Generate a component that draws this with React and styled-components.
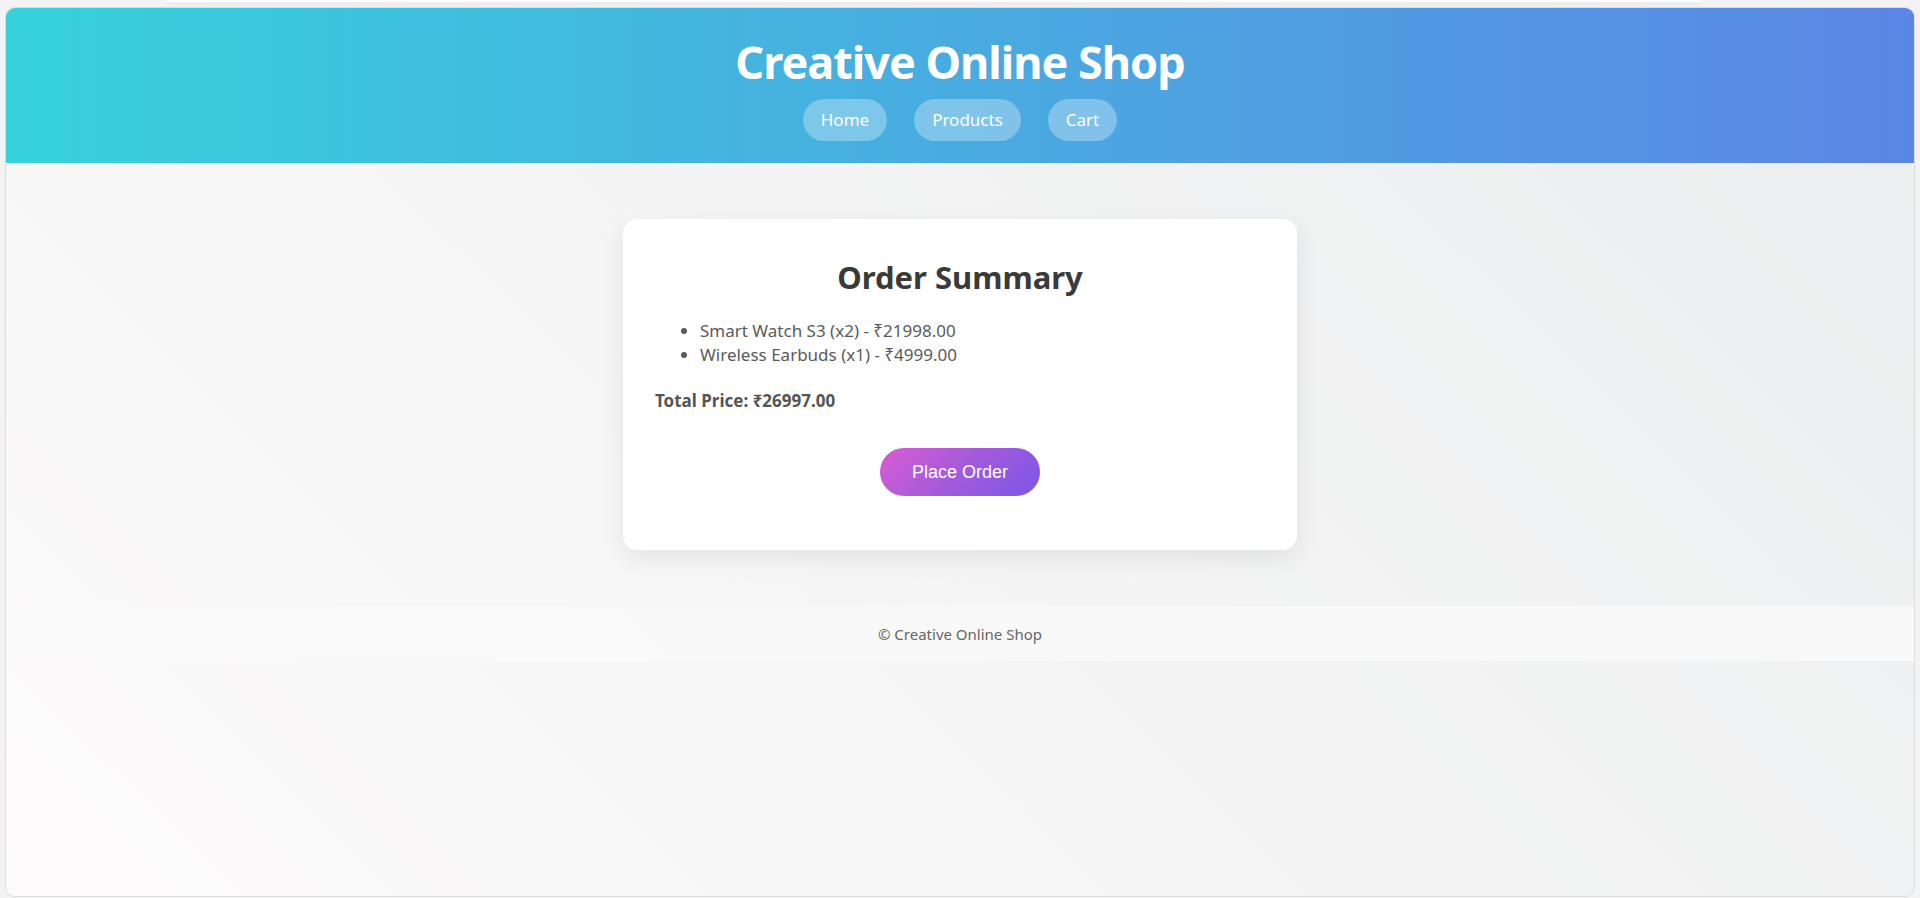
import React from 'react';
import styled, { createGlobalStyle } from 'styled-components';

const GlobalStyle = createGlobalStyle`
  html, body {
    margin: 0;
    padding: 0;
    background: #f3f3f3;
    font-family: "Noto Sans", "DejaVu Sans", sans-serif;
  }
`

const TopStrip = styled.div`
  width: 1533px;
  height: 2px;
  margin-left: 167px;
  background: #ffffff;
  box-shadow: 0 2px 4px rgba(0, 0, 0, 0.08);
`

const Frame = styled.div`
  margin: 5px 5px 0 5px;
  min-height: 888px;
  border: 1px solid #dcdcdc;
  border-radius: 10px;
  overflow: hidden;
  background: linear-gradient(225deg, #ebedee 0%, #fdfbfb 100%);
  display: flex;
  flex-direction: column;
`

const Header = styled.header`
  background: linear-gradient(to right, #36d1dc, #5b86e5);
  padding: 26px 0 22px;
  text-align: center;
  color: #ffffff;
`

const Title = styled.h1`
  margin: 0 0 9px;
  font-size: 45px;
  line-height: 56px;
  font-weight: 700;
  letter-spacing: -1px;
`

const Nav = styled.nav`
  display: flex;
  justify-content: center;
  gap: 27px;
`

const NavLink = styled.a`
  display: inline-block;
  padding: 0 18px;
  height: 42px;
  line-height: 42px;
  border-radius: 21px;
  background: rgba(255, 255, 255, 0.3);
  color: #ffffff;
  font-size: 17px;
  text-decoration: none;
`

const Main = styled.main`
  padding: 56px 0;
  display: flex;
  justify-content: center;
`

const Card = styled.section`
  width: 674px;
  box-sizing: border-box;
  padding: 38px 32px 54px;
  background: #ffffff;
  border-radius: 14px;
  box-shadow: 0 8px 24px rgba(0, 0, 0, 0.08);
`

const CardTitle = styled.h2`
  margin: 0 0 22px;
  text-align: center;
  font-size: 31px;
  line-height: 40px;
  font-weight: 700;
  color: #3a3a3a;
`

const ItemList = styled.ul`
  margin: 0 0 22px;
  padding-left: 45px;
  color: #5a5a5a;
  font-size: 17px;
  line-height: 24px;
`

const Total = styled.p`
  margin: 0 0 35px;
  font-size: 17px;
  line-height: 24px;
  font-weight: 700;
  color: #555555;
`

const ButtonRow = styled.div`
  display: flex;
  justify-content: center;
`

const OrderButton = styled.button`
  width: 160px;
  height: 48px;
  border: none;
  border-radius: 24px;
  background: linear-gradient(135deg, #d85cd4 0%, #a45adb 50%, #7c56e8 100%);
  color: #ffffff;
  font-family: "Liberation Sans", Arial, sans-serif;
  font-size: 18px;
  cursor: pointer;
`

const Footer = styled.footer`
  height: 55px;
  display: flex;
  align-items: center;
  justify-content: center;
  background: rgba(250, 250, 250, 0.9);
  color: #666666;
  font-size: 15px;
`

const items = [
  { name: 'Smart Watch S3', qty: 2, price: '21998.00' },
  { name: 'Wireless Earbuds', qty: 1, price: '4999.00' },
]

const App = () => (
  <>
    <GlobalStyle />
    <TopStrip />
    <Frame>
      <Header>
        <Title>Creative Online Shop</Title>
        <Nav>
          <NavLink href="#">Home</NavLink>
          <NavLink href="#">Products</NavLink>
          <NavLink href="#">Cart</NavLink>
        </Nav>
      </Header>
      <Main>
        <Card>
          <CardTitle>Order Summary</CardTitle>
          <ItemList>
            {items.map(item => (
              <li key={item.name}>{item.name} (x{item.qty}) - ₹{item.price}</li>
            ))}
          </ItemList>
          <Total>Total Price: ₹26997.00</Total>
          <ButtonRow>
            <OrderButton>Place Order</OrderButton>
          </ButtonRow>
        </Card>
      </Main>
      <Footer>© Creative Online Shop</Footer>
    </Frame>
  </>
)

export default App
